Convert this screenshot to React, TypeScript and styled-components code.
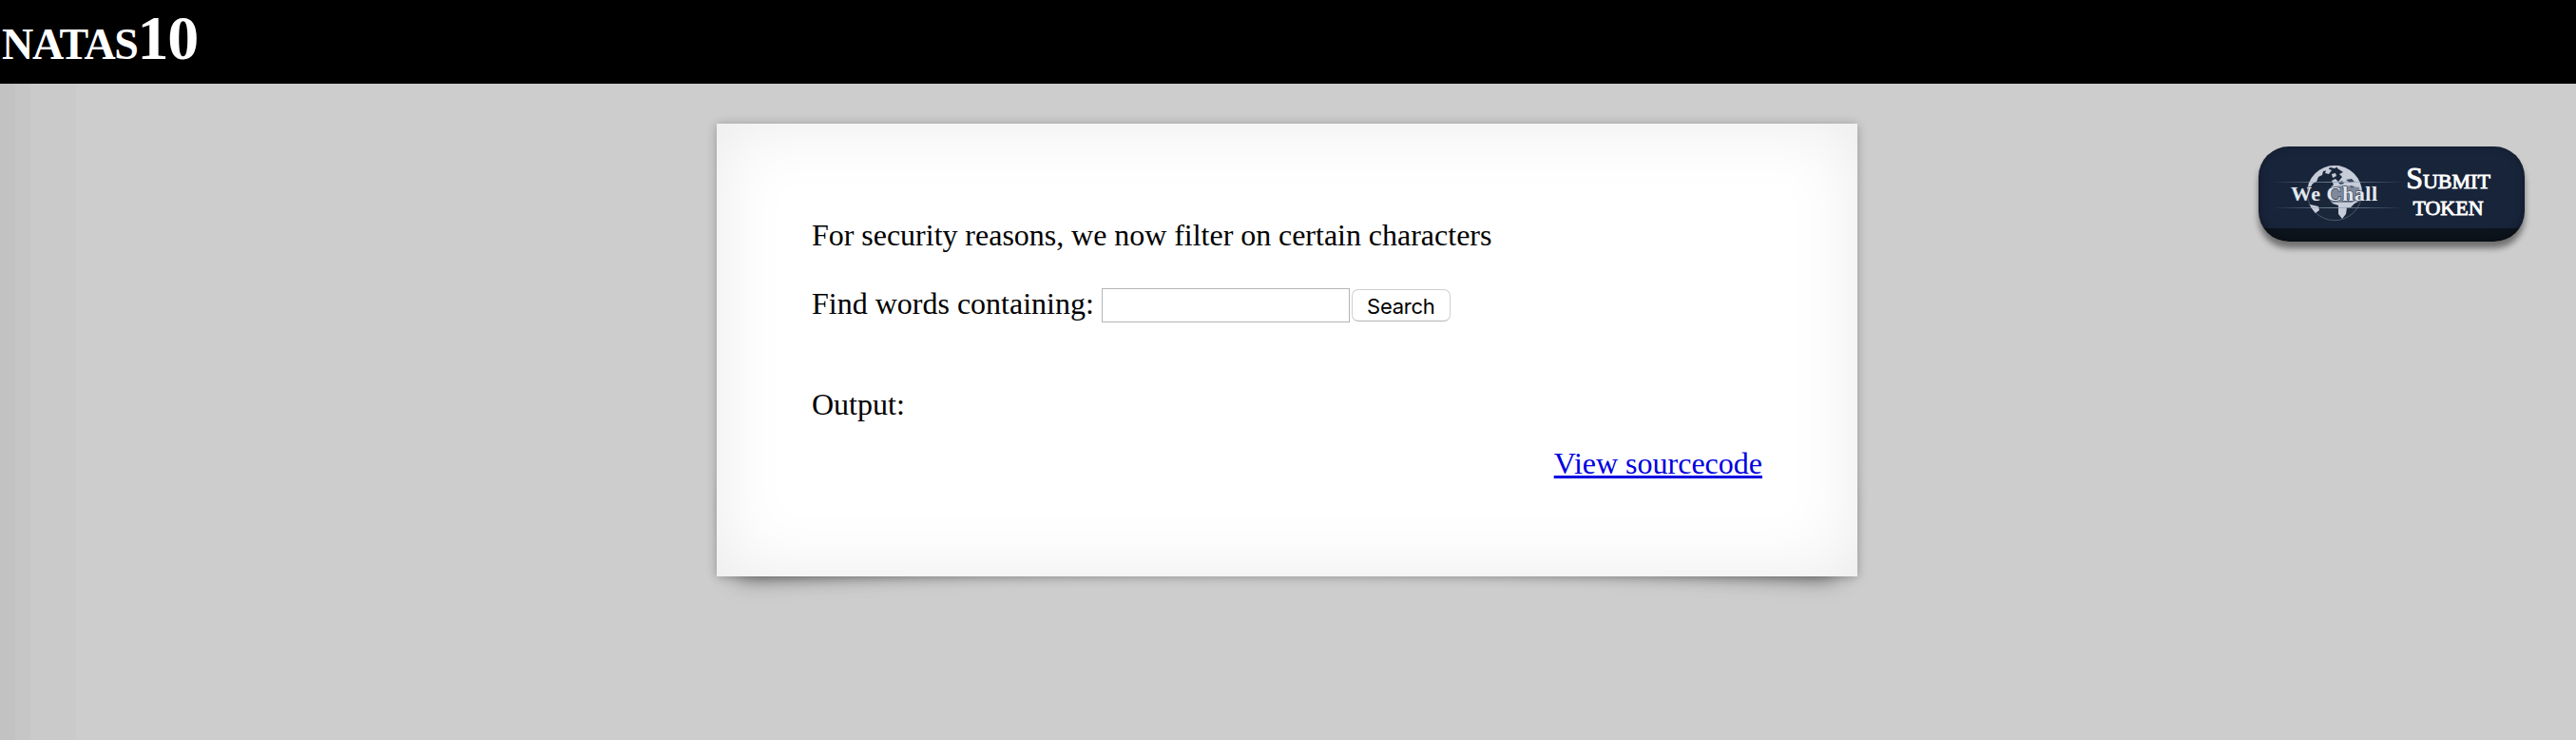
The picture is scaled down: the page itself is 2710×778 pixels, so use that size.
import React from "react";
import styled, { createGlobalStyle } from "styled-components";

const GlobalStyle = createGlobalStyle`
  body {
    margin: 0;
    background: #cdcdcd;
    font-family: "Liberation Serif", "Times New Roman", serif;
    font-size: 32px;
    color: #000;
  }
`;

const Page = styled.div`
  box-sizing: border-box;
  min-height: 778px;
  background: linear-gradient(
      to right,
      #c2c2c2 0 16px,
      #c6c6c6 16px 32px,
      #cacaca 32px 80px,
      transparent 80px
    )
    #cdcdcd;
`;

const Title = styled.h1`
  margin: 0;
  height: 88px;
  padding-left: 2px;
  background: #000;
  color: #fff;
  font-size: 66px;
  line-height: 79px;
  letter-spacing: -1.3px;
  font-variant: small-caps;
`;

const Main = styled.main`
  isolation: isolate;
  display: grid;
  grid-template-columns: 754px 1200px auto;
  align-items: start;
`;

const Card = styled.section`
  grid-column: 2;
  position: relative;
  box-sizing: border-box;
  height: 476px;
  margin-top: 42px;
  padding: 99px 100px 100px;
  display: flex;
  flex-direction: column;
  line-height: 36px;
  background: #fff;
  box-shadow: 0 1px 10px rgba(0, 0, 0, 0.27), inset 0 0 76px rgba(0, 0, 0, 0.085);
`;

/* Tilted box behind the card whose shadow peeks out below a corner. */
const CurledCorner = styled.i<{ $side: "left" | "right" }>`
  position: absolute;
  z-index: -1;
  bottom: 31px;
  ${(p) => p.$side}: 20px;
  width: 600px;
  height: 95px;
  box-shadow: 0 16px 24px rgba(0, 0, 0, 0.6);
  transform: rotate(${(p) => (p.$side === "left" ? -3 : 3)}deg);
`;

const Notice = styled.p`
  margin: 0;
  word-spacing: -0.2px;
  font-variant-ligatures: common-ligatures;
`;

const SearchForm = styled.form`
  display: flex;
  align-items: flex-start;
  margin-top: 36px;
`;

const Field = styled.input`
  box-sizing: border-box;
  width: 261px;
  height: 36px;
  margin: 2px 2px 0 8px;
  padding: 2px;
  border: 1px solid #b4b4b4;
  background: #fff;
  font-size: 22px;
`;

const SearchButton = styled.button`
  box-sizing: border-box;
  width: 104px;
  height: 34px;
  margin: 3px 0 0;
  padding: 0;
  border: 1px solid #cfcfcf;
  border-bottom-color: #b5b5b5;
  border-radius: 7px;
  background: #fff;
  color: #000;
  font: 22px/34px Inter, sans-serif;
  letter-spacing: -0.25px;
`;

const Output = styled.div`
  margin-top: 68px;
`;

const SourceLink = styled.a`
  align-self: flex-end;
  margin-top: 26px;
  color: #0000e0;
  text-decoration: underline;
`;

const TokenButton = styled.a`
  justify-self: end;
  box-sizing: border-box;
  display: flex;
  align-items: center;
  width: 280px;
  height: 100px;
  margin: 66px 54px 0 0;
  padding: 0 0 4px 14px;
  border-radius: 32px;
  background: linear-gradient(#18243a 0 86px, #0c141c 86px);
  box-shadow: inset 0 -2px 10px rgba(0, 0, 0, 0.35), 0 7px 6px rgba(0, 0, 0, 0.45);
  text-decoration: none;
`;

const TokenLabel = styled.span`
  flex: 1;
  padding: 0 33px 2px 0;
  margin-left: -2px;
  color: #fff;
  -webkit-text-stroke: 0.9px #fff;
  text-align: center;
  font-variant: small-caps;
  font-size: 32px;
  line-height: 28px;
`;

const WeChallLogo = () => (
  <svg width="140" height="76" viewBox="0 0 140 76">
    <defs>
      <linearGradient id="beam">
        <stop offset="0" stopColor="#8fa0b4" stopOpacity="0" />
        <stop offset=".5" stopColor="#8fa0b4" stopOpacity=".8" />
        <stop offset="1" stopColor="#8fa0b4" stopOpacity="0" />
      </linearGradient>
      <clipPath id="globe">
        <circle cx="66" cy="39" r="29" />
      </clipPath>
    </defs>
    <circle cx="66" cy="39" r="28.7" fill="#1a2639" stroke="#6d7a8e" strokeWidth=".6" />
    <g fill="#c6ccd8" clipPath="url(#globe)">
      <path d="M34 38L38 16L62 8L72 10L66 13L61 12L59 15L54 16L53 20L49 22L47 27L43 29L40 34Z" />
      <path d="M68 9L84 10L97 28L95 46L87 50L83 54H79L78 61L74 66L70 61L70 52L64 50L59 44L60 35L65 30L63 26L67 24L70 27L74 22L71 19L75 17L69 13Z" />
      <path d="M36 50L49 53L50 57L46 60L47 67L35 62Z" />
      <path d="M58 13l5 2-3 4-4-1zM63 19l4-1 1 3-4 2z" />
    </g>
    <g fill="#39475c">
      <path d="M78 25l6-1 3 3-5 1zM70 28l4-2 2 3-4 1zM82 31l5 1-3 2z" />
    </g>
    <path d="M60 34Q72 29 92 33L94 44L84 49H62Z" fill="#5a667b" opacity=".65" />
    <rect x="0" y="27" width="140" height="1" fill="url(#beam)" />
    <rect x="0" y="54" width="140" height="1" fill="url(#beam)" />
    <text
      x="20"
      y="47"
      fontFamily="Liberation Serif, serif"
      fontWeight="700"
      fontSize="22"
      textLength="91"
      fill="#e2e7ef"
      stroke="#26344b"
      strokeWidth="1.2"
      paintOrder="stroke"
    >
      We Chall
    </text>
  </svg>
);

export default function App() {
  return (
    <Page>
      <GlobalStyle />
      <Title>natas10</Title>
      <Main>
        <Card>
          <CurledCorner $side="left" />
          <CurledCorner $side="right" />
          <Notice>For security reasons, we now filter on certain characters</Notice>
          <SearchForm onSubmit={(e) => e.preventDefault()}>
            <span>Find words containing:</span>
            <Field aria-label="Find words containing" />
            <SearchButton type="submit">Search</SearchButton>
          </SearchForm>
          <Output>Output:</Output>
          <SourceLink href="#">View sourcecode</SourceLink>
        </Card>
        <TokenButton href="#">
          <WeChallLogo />
          <TokenLabel>
            Submit
            <br />
            token
          </TokenLabel>
        </TokenButton>
      </Main>
    </Page>
  );
}
